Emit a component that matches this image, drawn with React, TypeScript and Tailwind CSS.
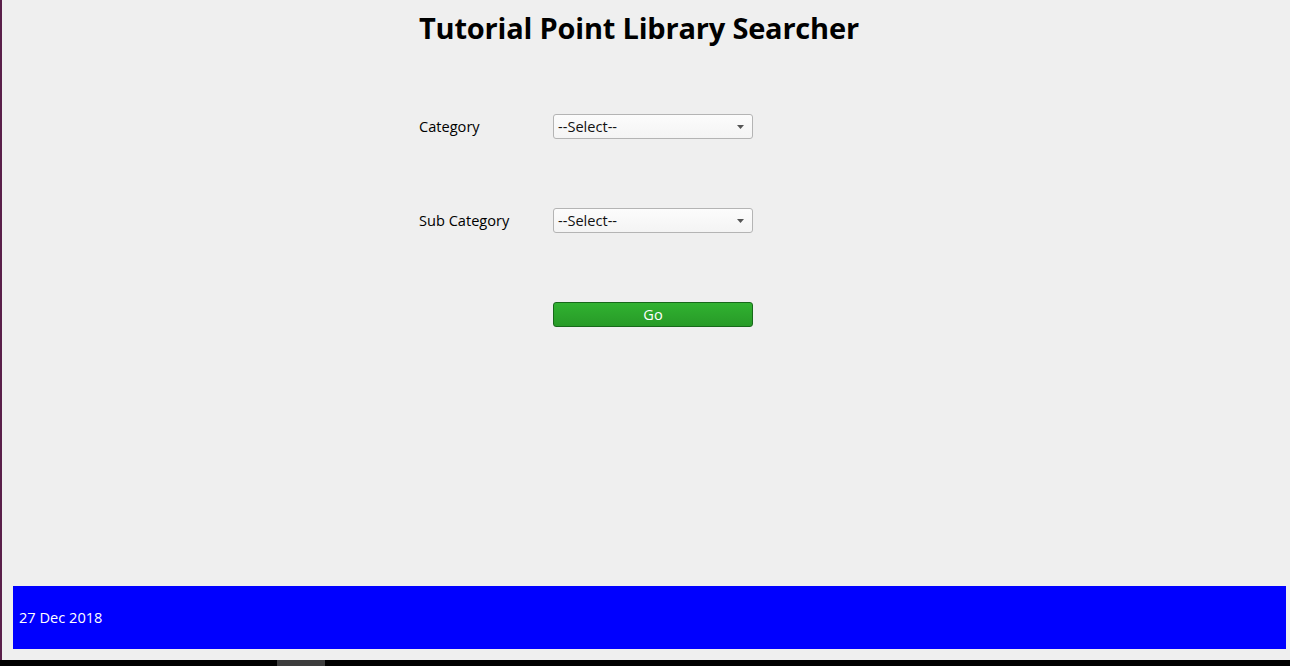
import React from "react";

function SelectBox() {
  return (
    <div className="relative flex h-[25px] w-[200px] items-center rounded-[3px] border border-[#b4b4b4] bg-gradient-to-b from-[#fcfcfc] to-[#f4f4f4] pl-[4px]">
      <span className="text-[14.6px] leading-none text-[#111]">--Select--</span>
      <svg className="absolute right-[8px] top-[10px]" width="7" height="4" viewBox="0 0 7 4">
        <polygon points="0,0 7,0 3.5,4" fill="#555" />
      </svg>
    </div>
  );
}

export default function App() {
  return (
    <div
      className="flex h-[666px] w-[1290px] flex-col overflow-hidden bg-black"
      style={{ fontFamily: '"Open Sans", "Noto Sans", sans-serif' }}
    >
      <div className="flex h-[660px] w-full">
        <div className="h-full w-[2px] bg-[#5a1f4a]" />
        <div className="flex h-full flex-1 flex-col bg-[#efefef]">
          <div className="flex flex-1 flex-col pl-[417px]">
            <h1 className="mt-[8px] h-[40px] text-[29px] font-bold leading-[40px] tracking-[-0.2px] text-black">
              Tutorial Point Library Searcher
            </h1>
            <div className="mt-[66px] flex flex-col gap-[69px]">
              <div className="flex h-[25px] items-center">
                <span className="w-[134px] text-[14.6px] text-black">Category</span>
                <SelectBox />
              </div>
              <div className="flex h-[25px] items-center">
                <span className="w-[134px] text-[14.6px] text-black">Sub Category</span>
                <SelectBox />
              </div>
              <div className="flex h-[25px] items-center">
                <span className="w-[134px]" />
                <button className="flex h-[25px] w-[200px] items-center justify-center rounded-[3px] border border-[#17691a] bg-gradient-to-b from-[#31b231] to-[#279a27] text-[14.6px] text-white">
                  Go
                </button>
              </div>
            </div>
          </div>
          <div className="mb-[11px] ml-[11px] mr-[4px] flex h-[63px] items-center bg-[#0000ff] pl-[6px]">
            <span className="text-[14.6px] text-white">27 Dec 2018</span>
          </div>
        </div>
      </div>
      <div className="flex h-[6px] w-full">
        <div className="ml-[277px] h-full w-[48px] bg-[#3c3c3c]" />
      </div>
    </div>
  );
}
